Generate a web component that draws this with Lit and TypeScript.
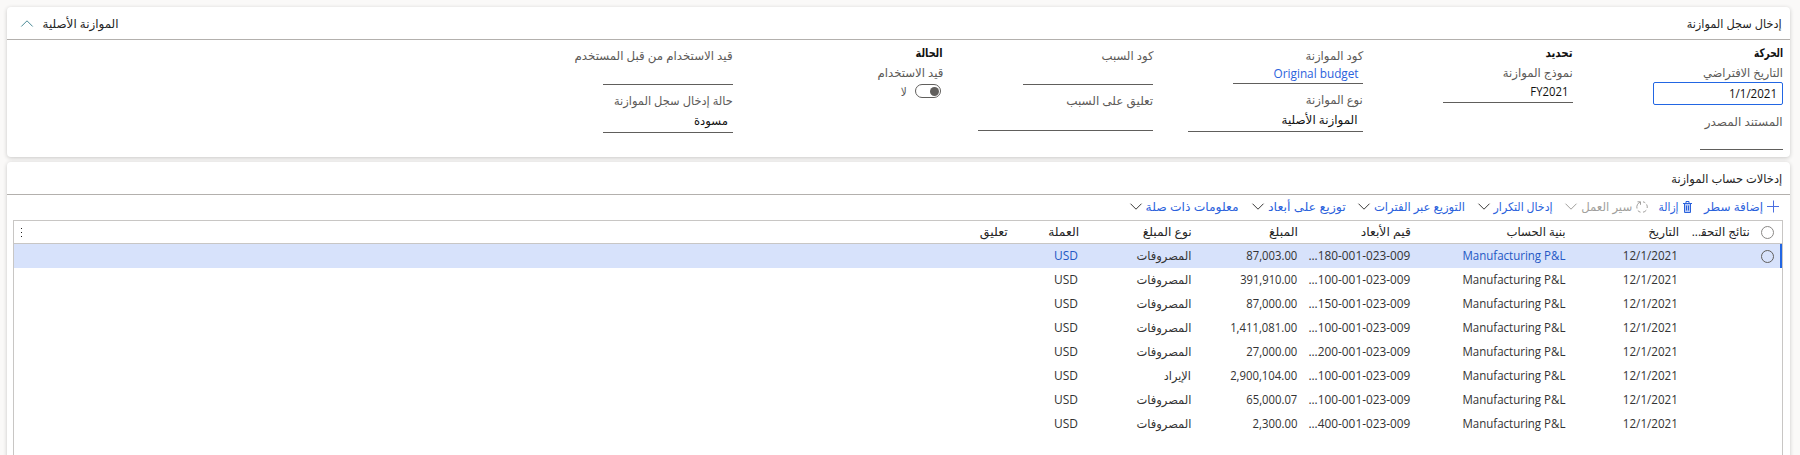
import { LitElement, html, css, svg, nothing } from "lit";
import { customElement, property } from "lit/decorators.js";
import { classMap } from "lit/directives/class-map.js";

/** A single line of text condensed or stretched to a set width. */
@customElement("fit-text")
class FitText extends LitElement {
  @property() text = "";
  @property({ type: Number }) width = 0;
  @property({ type: Boolean }) ltr = false;
  static styles = css`
    :host { display: block; flex: none; white-space: nowrap; }
    .box { display: flex; justify-content: flex-start; }
    .ink { flex: none; transform-origin: 100% 50%; }
  `;
  updated() {
    const ink = this.renderRoot.querySelector(".ink") as HTMLElement;
    const natural = ink.getBoundingClientRect().width;
    if (this.width && natural) ink.style.transform = `scaleX(${this.width / natural})`;
  }
  render() {
    return html`<div class="box" style="width:${this.width}px">
      <span class="ink" dir=${this.ltr ? "ltr" : "rtl"}>${this.text}</span>
    </div>`;
  }
}

const t = (text: string, width: number, ltr = false) =>
  html`<fit-text .text=${text} .width=${width} ?ltr=${ltr}></fit-text>`;

const chevron = html`<svg class="ico chev" viewBox="0 0 12 12">${svg`<path d="M.5 2.7 6 8.2l5.5-5.5"/>`}</svg>`;
const icons: Record<string, unknown> = {
  add: html`<svg class="ico add" viewBox="0 0 12 12"><path d="M0 5.5h12M6.5 -.5v12"/></svg>`,
  remove: html`<svg class="ico bin" viewBox="0 0 9 12"><path class="tint" d="M1.5 2.5h6v8.5h-6z"/><path d="M0 2.5h9M1.5 2.5V11.5h6V2.5M3 2V.5h3V2M3.5 4.5v5M5.5 4.5v5"/></svg>`,
  flow: html`<svg class="ico" viewBox="0 0 12 12"><path d="M1.5 .8h3v3M4.2 1.2A5.2 5.2 0 0 0 1 7.5M1.8 9.5A5.2 5.2 0 0 0 4.5 11.2M7 11.2A5.2 5.2 0 0 0 10.3 9.2M11.2 7A5.2 5.2 0 0 0 10.6 3.4M9.3 1.9A5.2 5.2 0 0 0 7 .8"/></svg>`,
};

interface Command { label: string; width: number; icon?: string; menu?: boolean; off?: boolean }
const commands: Command[] = [
  { label: "إضافة سطر", width: 59, icon: "add" },
  { label: "إزالة", width: 20, icon: "remove" },
  { label: "سير العمل", width: 51, icon: "flow", menu: true, off: true },
  { label: "إدخال التكرار", width: 59, menu: true },
  { label: "التوزيع عبر الفترات", width: 91, menu: true },
  { label: "توزيع على أبعاد", width: 78, menu: true },
  { label: "معلومات ذات صلة", width: 93, menu: true },
];

const headers: [string, number][] = [
  ["نتائج التحق\u200d...", 58], ["التاريخ", 31], ["بنية الحساب", 59], ["قيم الأبعاد", 50],
  ["المبلغ", 29], ["نوع المبلغ", 49], ["العملة", 31], ["تعليق", 28],
];

const expense = "المصروفات";
const rows: [string, string, number, string][] = [
  ["180", "87,003.00", 51, expense],
  ["100", "391,910.00", 57, expense],
  ["150", "87,000.00", 51, expense],
  ["100", "1,411,081.00", 67, expense],
  ["200", "27,000.00", 51, expense],
  ["100", "2,900,104.00", 67, "الإيراد"],
  ["100", "65,000.07", 51, expense],
  ["400", "2,300.00", 45, expense],
];

@customElement("app-root")
class AppRoot extends LitElement {
  static styles = css`
    :host {
      display: block; direction: rtl; box-sizing: border-box; height: 455px; overflow: hidden;
      padding: 7px 10px 0 7px; background: #faf9f8; color: #242424;
      font: 12px/16px "Open Sans", "Noto Sans", "DejaVu Sans", sans-serif;
    }
    * { box-sizing: border-box; }
    .card { background: #fff; border-radius: 4px; box-shadow: 0 1px 4px rgba(0,0,0,.2); }
    .summary { height: 150px; margin-bottom: 5px; }
    .lines { height: 310px; }
    .bar {
      height: 33px; border-bottom: 1px solid #b3b0ad; padding: 2px 8px 0 14px;
      display: flex; align-items: center; justify-content: space-between;
    }
    .side { display: flex; align-items: center; gap: 10px; }
    .ico { width: 12px; height: 12px; fill: none; stroke: currentColor; stroke-width: 1; flex: none; display: block; overflow: visible; }
    .collapse { stroke: #4a8a96; }
    .form { display: flex; padding: 5px 7px 0 0; }
    .col { width: 210px; flex: none; display: flex; flex-direction: column; align-items: flex-start; }
    .col.plain { padding-top: 3px; }
    .title { font-weight: 700; color: #111; height: 18px; }
    .title + .field { margin-top: 2px; }
    .field { color: #5c5a58; }
    .val { display: flex; align-items: center; color: #111; border-bottom: 1px solid #605e5c; padding: 1px 5px 0 0; width: 130px; height: 20px; }
    .val.wide { width: 175px; }
    .val.short { width: 83px; }
    .val.link { color: #2b62dc; padding-right: 4px; }
    .val.box { height: 23px; margin-top: 1px; border: 1px solid #2266e3; border-radius: 2px; padding: 0 5px 0 0; }
    .val.h20 { height: 20px; } .val.h21 { height: 21px; } .val.h22 { height: 22px; } .val.h24 { height: 24px; }
    .next { margin-top: 8px; }
    .next.far { margin-top: 9px; }
    .switchrow { display: flex; align-items: center; gap: 8px; padding: 2px 2px 0 0; }
    .switchrow fit-text { padding-top: 2px; }
    .switch { width: 26px; height: 14px; border: 1px solid #605e5c; border-radius: 7px; padding: 1.5px; display: flex; }
    .switchrow { height: 18px; }
    .knob { width: 9px; height: 9px; border-radius: 50%; background: #605e5c; }
    .tools { height: 25px; padding: 0 11px 2px 0; display: flex; align-items: center; gap: 12.5px; color: #2b62dc; }
    .cmd { display: flex; align-items: center; gap: 4px; }
    .cmd.off { color: #a19f9d; margin-right: -2px; }
    .cmd .chev { stroke: #3b3a39; }
    .cmd.off .chev { stroke: #a19f9d; }
    .bin { width: 9px; }
    .tint { fill: #b9cbf7; stroke: none; }
    .add { stroke: #4a6ee0; }
    .grid { margin: 0 7px 0 6px; border: 1px solid #c8c6c4; height: 250px; }
    .row {
      position: relative; height: 24px; display: grid; align-items: center; color: #333;
      grid-template-columns: 33px 71px 113px 155px 113px 106px 113px 70px 1fr;
    }
    .head {
      height: 23px; border-bottom: 1px solid #c8c6c4; color: #242424;
      grid-template-columns: 32px 71px 113px 155px 113px 106px 113px 71px 1fr;
    }
    .on { background: #d7e2fb; }
    .mark { position: absolute; right: 0; top: 0; width: 2px; height: 24px; background: #2266e3; }
    .ring { width: 13px; height: 13px; border: 1px solid #8a8886; border-radius: 50%; margin-right: 8px; }
    .on .ring { border-color: #605e5c; }
    .on .ref { color: #2458c4; }
    .last { display: flex; justify-content: space-between; align-items: center; }
    .dots { width: 1px; height: 9px; display: flex; flex-direction: column; justify-content: space-between; margin-left: 7px; }
    .dots i { width: 1px; height: 1px; background: #222; }
  `;

  private field(label: string, w: number, cls: string, value: unknown = nothing, place = "") {
    return html`<div class="field ${place}">${t(label, w)}<div class="val ${cls}">${value}</div></div>`;
  }

  render() {
    return html`
      <section class="card summary">
        <div class="bar">
          ${t("إدخال سجل الموازنة", 95)}
          <div class="side">
            ${t("الموازنة الأصلية", 76)}
            <svg class="ico collapse" viewBox="0 0 12 12"><path d="M.3 8.5 6 2.8 11.7 8.5"/></svg>
          </div>
        </div>
        <div class="form">
          <div class="col">
            <div class="title">${t("الحركة", 29)}</div>
            ${this.field("التاريخ الافتراضي", 80, "box", t("1/1/2021", 48, true))}
            ${this.field("المستند المصدر", 78, "short h20", nothing, "next far")}
          </div>
          <div class="col">
            <div class="title">${t("تحديد", 27)}</div>
            ${this.field("نموذج الموازنة", 70, "h22", t("FY2021", 38, true))}
          </div>
          <div class="col plain">
            ${this.field("كود الموازنة", 58, "link", t("Original budget", 85, true))}
            ${this.field("نوع الموازنة", 57, "wide h24", t("الموازنة الأصلية", 76), "next")}
          </div>
          <div class="col plain">
            ${this.field("كود السبب", 52, "h21")}
            ${this.field("تعليق على السبب", 87, "wide h22", nothing, "next")}
          </div>
          <div class="col">
            <div class="title">${t("الحالة", 27)}</div>
            <div class="field">
              ${t("قيد الاستخدام", 66)}
              <div class="switchrow"><div class="switch"><div class="knob"></div></div>${t("لا", 6)}</div>
            </div>
          </div>
          <div class="col plain">
            ${this.field("قيد الاستخدام من قبل المستخدم", 158, "h21")}
            ${this.field("حالة إدخال سجل الموازنة", 119, "h24", t("مسودة", 34), "next")}
          </div>
        </div>
      </section>
      <section class="card lines">
        <div class="bar">${t("إدخالات حساب الموازنة", 111)}</div>
        <div class="tools">
          ${commands.map((c) => html`<div class=${classMap({ cmd: true, off: !!c.off })}>
            ${c.icon ? icons[c.icon] : nothing}${t(c.label, c.width)}${c.menu ? chevron : nothing}
          </div>`)}
        </div>
        <div class="grid">
          <div class="row head">
            <div class="ring"></div>
            ${headers.slice(0, 7).map(([h, w]) => t(h, w))}
            <div class="last">${t(headers[7][0], headers[7][1])}<div class="dots"><i></i><i></i><i></i></div></div>
          </div>
          ${rows.map(([dim, amount, w, kind], i) => html`<div class=${classMap({ row: true, on: i === 0 })}>
            ${i === 0 ? html`<div class="ring"></div><div class="mark"></div>` : html`<span></span>`}
            <span></span>
            ${t("12/1/2021", 55, true)}
            <div class="ref">${t("Manufacturing P&L", 103, true)}</div>
            ${t(`...${dim}-001-023-009`, 102, true)}
            ${t(amount, w, true)}
            ${t(kind, kind === expense ? 55 : 27)}
            <div class="ref">${t("USD", 24, true)}</div>
            <span></span>
          </div>`)}
        </div>
      </section>
    `;
  }
}
